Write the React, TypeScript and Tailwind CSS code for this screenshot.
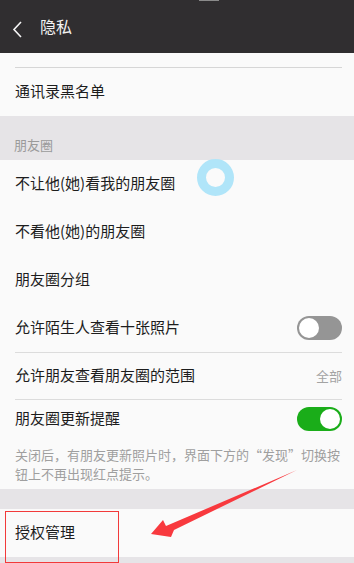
import React from "react";

const font = { fontFamily: '"Noto Sans CJK SC", "Noto Sans", sans-serif' };

function Toggle({ on }: { on: boolean }) {
  return on ? (
    <div className="w-[45px] h-[24px] rounded-full bg-[#1aad19] relative">
      <div className="absolute right-[2px] top-[2px] w-[20px] h-[20px] rounded-full bg-white" />
    </div>
  ) : (
    <div className="w-[45px] h-[24px] rounded-full bg-[#959595] relative">
      <div className="absolute left-[2px] top-[2px] w-[20px] h-[20px] rounded-full bg-white" />
    </div>
  );
}

function Row({ children, right, h = "h-[48px]" }: { children: React.ReactNode; right?: React.ReactNode; h?: string }) {
  return (
    <div className={`${h} flex items-center justify-between pl-[15px] pr-[12px]`}>
      <span className="text-[15px] text-[#1d1d1d] leading-none pb-[3px]">{children}</span>
      {right}
    </div>
  );
}

export default function App() {
  return (
    <div className="relative w-[354px] h-[563px] overflow-hidden bg-[#e6e4e7]" style={font}>
      <div className="h-[53px] bg-[#302e30] flex items-center">
        <svg width="40" height="53" viewBox="0 0 40 53" className="shrink-0">
          <polyline points="21,22 14,29.5 21,37" fill="none" stroke="#f5f5f5" strokeWidth="1.6" />
        </svg>
        <span className="text-[16px] text-[#f2f2f2] leading-none pb-[2px]">隐私</span>
      </div>
      <div className="absolute left-[199px] top-0 w-[20px] h-[1px] bg-[#8a8a8a]" />

      <div className="bg-[#fafafa] pt-[14px]">
        <div className="ml-[15px] mr-[12px] h-px bg-[#d6d6d6]" />
        <Row h="h-[48px]">通讯录黑名单</Row>
      </div>

      <div className="h-[44px] flex items-end pl-[14px] pb-[9px]">
        <span className="text-[13px] text-[#9a9a9a] leading-none">朋友圈</span>
      </div>

      <div className="bg-[#fafafa]">
        <Row>不让他(她)看我的朋友圈</Row>
        <Row>不看他(她)的朋友圈</Row>
        <Row>朋友圈分组</Row>
        <Row right={<Toggle on={false} />}>允许陌生人查看十张照片</Row>
        <div className="ml-[15px] mr-[12px] h-px bg-[#dcdcdc]" />
        <Row h="h-[46px]" right={<span className="text-[13px] text-[#a3a3a3] leading-none pb-[2px]">全部</span>}>
          允许朋友查看朋友圈的范围
        </Row>
        <div className="ml-[15px] mr-[12px] h-px bg-[#dcdcdc]" />
        <Row h="h-[37px]" right={<Toggle on={true} />}>朋友圈更新提醒</Row>
        <div className="pl-[15px] pr-[10px] pt-[8px] pb-[6px] text-[13px] leading-[19px] text-[#9f9f9f]">
          关闭后，有朋友更新照片时，界面下方的“发现”切换按
          <br />
          钮上不再出现红点提示。
        </div>
      </div>

      <div className="h-[20px]" />

      <div className="bg-[#fafafa]">
        <Row>授权管理</Row>
      </div>

      <div className="absolute left-[197px] top-[159px] w-[37px] h-[37px] rounded-full border-[9.5px] border-[#b0e5f9]" />

      <div className="absolute left-[5px] top-[511px] w-[114px] h-[52px] border border-[#f23a3a]" />

      <svg className="absolute left-0 top-0" width="354" height="563" viewBox="0 0 354 563">
        <polygon
          points="151,534 163,520 166,526 297,470 174,530 171,537"
          fill="#f8393e"
        />
      </svg>
    </div>
  );
}
